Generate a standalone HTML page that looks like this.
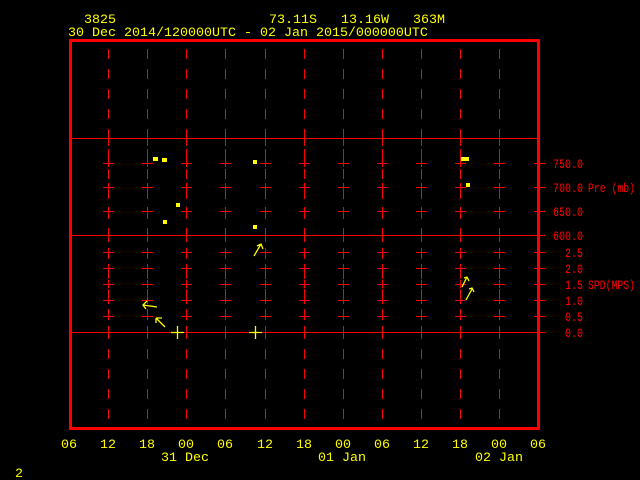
<!DOCTYPE html>
<html><head><meta charset="utf-8"><style>
html,body{margin:0;padding:0;background:#000;width:640px;height:480px;overflow:hidden}
svg{display:block}
text{font-family:"Liberation Mono",monospace;font-size:13.33px}
.r{font-size:13px}
</style></head><body>
<svg width="640" height="480" viewBox="0 0 640 480" xmlns="http://www.w3.org/2000/svg">
<rect width="640" height="480" fill="#000"/>
<g fill="#ffff00">
<text x="84" y="23">3825</text>
<text x="269" y="23">73.11S</text>
<text x="341" y="23">13.16W</text>
<text x="413" y="23">363M</text>
<text x="68" y="36">30 Dec 2014/120000UTC - 02 Jan 2015/000000UTC</text>
</g>
<g stroke="#ff0000" stroke-width="1" stroke-dasharray="10 10" stroke-dashoffset="-9">
<line x1="108.5" y1="40" x2="108.5" y2="428"/>
<line x1="147.5" y1="40" x2="147.5" y2="428"/>
<line x1="186.5" y1="40" x2="186.5" y2="428"/>
<line x1="225.5" y1="40" x2="225.5" y2="428"/>
<line x1="265.5" y1="40" x2="265.5" y2="428"/>
<line x1="304.5" y1="40" x2="304.5" y2="428"/>
<line x1="343.5" y1="40" x2="343.5" y2="428"/>
<line x1="382.5" y1="40" x2="382.5" y2="428"/>
<line x1="421.5" y1="40" x2="421.5" y2="428"/>
<line x1="460.5" y1="40" x2="460.5" y2="428"/>
<line x1="499.5" y1="40" x2="499.5" y2="428"/>
</g>
<g id="cr" stroke="#ff0000" stroke-width="1">
<path d="M103 163.5h11M103 187.5h11M103 211.5h11M103 252.5h11M103 268.5h11M103 284.5h11M103 300.5h11M103 316.5h11M108.5 159v8M108.5 183v8M108.5 207v8M108.5 248v8M108.5 264v8M108.5 280v8M108.5 296v8M108.5 312v8M108.5 130v16M108.5 228v14M108.5 326v12"/>
</g>
<use href="#cr" x="39"/><use href="#cr" x="78"/><use href="#cr" x="117"/><use href="#cr" x="157"/><use href="#cr" x="196"/><use href="#cr" x="235"/><use href="#cr" x="274"/><use href="#cr" x="313"/><use href="#cr" x="352"/><use href="#cr" x="391"/>
<g stroke="#ff0000" stroke-width="1">
<line x1="70" y1="138.5" x2="540" y2="138.5"/>
<line x1="70" y1="235.5" x2="545" y2="235.5"/>
<line x1="70" y1="332.5" x2="545" y2="332.5"/>
<path d="M534 163.5h11M534 187.5h11M534 211.5h11M534 252.5h11M534 268.5h11M534 284.5h11M534 300.5h11M534 316.5h11"/>
</g>
<rect x="70.5" y="40.5" width="468" height="388" fill="none" stroke="#ff0000" stroke-width="3"/>
<g fill="#ff0000">
<text class="r" x="553" y="168" textLength="30" lengthAdjust="spacingAndGlyphs">750.0</text>
<text class="r" x="553" y="192" textLength="30" lengthAdjust="spacingAndGlyphs">700.0</text>
<text class="r" x="553" y="216" textLength="30" lengthAdjust="spacingAndGlyphs">650.0</text>
<text class="r" x="553" y="240" textLength="30" lengthAdjust="spacingAndGlyphs">600.0</text>
<text class="r" x="565" y="257" textLength="18" lengthAdjust="spacingAndGlyphs">2.5</text>
<text class="r" x="565" y="273" textLength="18" lengthAdjust="spacingAndGlyphs">2.0</text>
<text class="r" x="565" y="289" textLength="18" lengthAdjust="spacingAndGlyphs">1.5</text>
<text class="r" x="565" y="305" textLength="18" lengthAdjust="spacingAndGlyphs">1.0</text>
<text class="r" x="565" y="321" textLength="18" lengthAdjust="spacingAndGlyphs">0.5</text>
<text class="r" x="565" y="337" textLength="18" lengthAdjust="spacingAndGlyphs">0.0</text>
<text class="r" x="588" y="192" textLength="47" lengthAdjust="spacingAndGlyphs">Pre (mb)</text>
<text class="r" x="588" y="289" textLength="47" lengthAdjust="spacingAndGlyphs">SPD(MPS)</text>
</g>
<g fill="#ffff00">
<rect x="153" y="157" width="5" height="4"/>
<rect x="162" y="158" width="5" height="4"/>
<rect x="176" y="203" width="4" height="4"/>
<rect x="163" y="220" width="4" height="4"/>
<rect x="253" y="160" width="4" height="4"/>
<rect x="253" y="225" width="4" height="4"/>
<rect x="461" y="157" width="8" height="4"/>
<rect x="466" y="183" width="4" height="4"/>
</g>
<g stroke="#ffff00" stroke-width="1.3" fill="none">
<path d="M177.5 326v13M171 332.5h13"/>
<path d="M255.5 326v13M249 332.5h13"/>
<path d="M254 256l7-12M257 246l4-2 2 5"/>
<path d="M143 305l14 2M147 301l-4 4 3 4"/>
<path d="M165 327l-9-9M156 318v5M156 318h6"/>
<path d="M462 287l5-10M464 278l3-1 2 4"/>
<path d="M466 300l6-11M469 289l3-1 2 4"/>
</g>
<g fill="#ffff00" text-anchor="middle">
<text x="69" y="448">06</text><text x="108" y="448">12</text><text x="147" y="448">18</text><text x="186" y="448">00</text><text x="225" y="448">06</text><text x="265" y="448">12</text><text x="304" y="448">18</text><text x="343" y="448">00</text><text x="382" y="448">06</text><text x="421" y="448">12</text><text x="460" y="448">18</text><text x="499" y="448">00</text><text x="538" y="448">06</text>
</g>
<g fill="#ffff00">
<text x="161" y="461">31 Dec</text>
<text x="318" y="461">01 Jan</text>
<text x="475" y="461">02 Jan</text>
<text x="15" y="477">2</text>
</g>
</svg>
</body></html>
